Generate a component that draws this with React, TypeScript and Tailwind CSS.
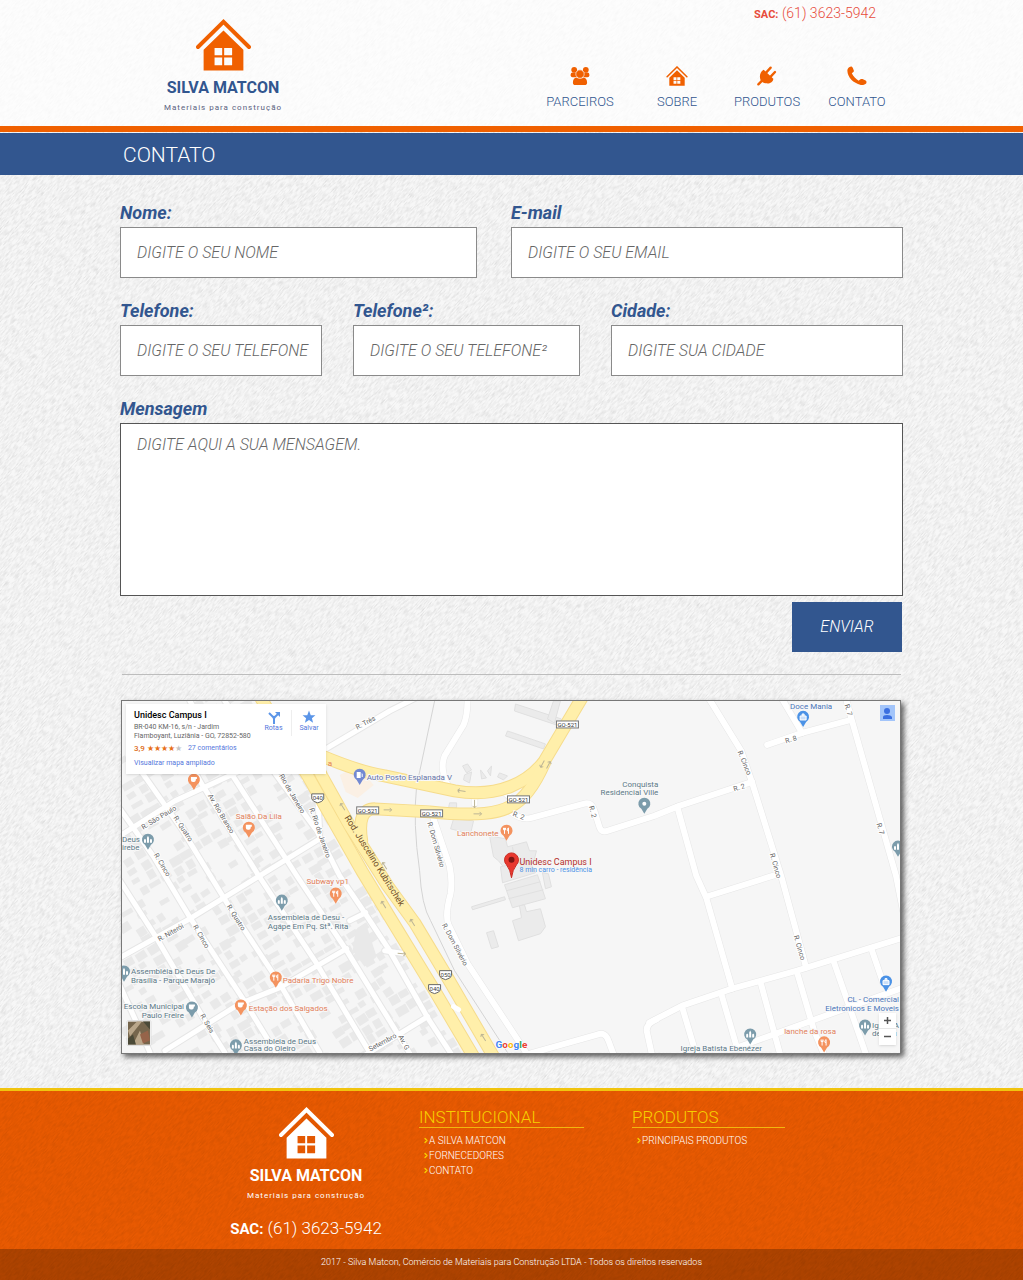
import React from "react";
import { ChevronRight } from "lucide-react";

function Texture({ id, className }: { id: string; className: string }) {
  return (
    <svg aria-hidden="true" className={"pointer-events-none absolute inset-0 h-full w-full " + className}>
      <defs>
        <filter id={id} x="0" y="0" width="100%" height="100%">
          <feTurbulence type="fractalNoise" baseFrequency="0.9 0.15" numOctaves={3} seed={7} />
          <feColorMatrix values="0 0 0 0 0  0 0 0 0 0  0 0 0 0 0  0.8 0 0 0 -0.3" />
        </filter>
      </defs>
      <g transform="rotate(42)">
        <rect x="-400" y="-1200" width="2600" height="2600" filter={"url(#" + id + ")"} />
      </g>
    </svg>
  );
}

function House({ className }: { className: string }) {
  return (
    <svg viewBox="137 28 166 156" className={className} fill="currentColor" aria-hidden="true">
      <path d="M143 112L220 36L297 112" fill="none" stroke="currentColor" strokeWidth="12" strokeLinecap="round" />
      <path
        fillRule="evenodd"
        d="M160 120L220 62L280 120V183H160ZM193 115V137H216V115ZM222 115V137H246V115ZM193 144V167H216V144ZM222 144V167H246V144Z"
      />
    </svg>
  );
}

function Logo({ tone, sub }: { tone: string; sub: string }) {
  return (
    <div className="flex w-[116px] flex-col items-center">
      <House className="h-[52px] w-[55px]" />
      <div className={"mt-[3px] whitespace-nowrap text-[16px] leading-[28px] font-bold " + tone}>SILVA MATCON</div>
      <div className={"whitespace-nowrap text-[8px] leading-[12px] font-normal tracking-[1px] " + sub}>
        Materiais para construção
      </div>
    </div>
  );
}

const UsersIcon = (
  <svg viewBox="172 195 62 60" className="h-5 w-5" fill="currentColor" aria-hidden="true">
    <circle cx="185" cy="206" r="9" />
    <circle cx="221" cy="206" r="9" />
    <rect x="174" y="214" width="24" height="15" rx="6" />
    <rect x="208" y="214" width="24" height="15" rx="6" />
    <circle cx="203" cy="219" r="13" stroke="#fcfcfc" strokeWidth="2" />
    <path d="M181 245C181 236 187 229 194 231Q203 236 212 231C219 229 225 236 225 245Q225 253 217 253H189Q181 253 181 245Z" />
  </svg>
);
const PlugIcon = (
  <svg viewBox="737 195 58 60" className="h-5 w-5" fill="currentColor" aria-hidden="true">
    <g fill="none" stroke="currentColor" strokeLinecap="round">
      <path d="M764 214L777 200M777 227L790 213" strokeWidth="7" />
      <path d="M740 250L752 238" strokeWidth="7" />
    </g>
    <path d="M756 206L785 233C785 243 774 248 765 247C757 247 747 243 746 235C743 226 745 211 756 206Z" />
  </svg>
);
const PhoneIcon = (
  <svg viewBox="0 0 58 58" className="h-5 w-5" fill="currentColor" aria-hidden="true">
    <path d="M10 2C13 1 16 3 17 6L20 14C20 18 16 20 14 21C18 30 26 38 34 43C37 39 41 37 45 38L54 42C57 44 57 47 56 50C53 54 46 56 40 55C18 50 2 33 1 14C1 8 4 3 10 2Z" />
  </svg>
);

const nav = [
  { label: "PARCEIROS", icon: UsersIcon },
  { label: "SOBRE", icon: <House className="h-5 w-[22px]" /> },
  { label: "PRODUTOS", icon: PlugIcon },
  { label: "CONTATO", icon: PhoneIcon },
];

const labelCls = "block text-[18px] leading-[28px] font-bold italic text-[#32568f]";
const fieldCls =
  "block w-full rounded-none border border-[#8a8a8a] bg-white pl-4 text-[16px] font-light italic text-[#555] placeholder:text-[#666] outline-none";

function Field({ id, label, hint, type = "text" }: { id: string; label: string; hint: string; type?: string }) {
  return (
    <div className="min-w-0">
      <label htmlFor={id} className={labelCls}>
        {label}
      </label>
      <input id={id} type={type} placeholder={hint} className={fieldCls + " h-[51px]"} />
    </div>
  );
}

/* ---------- Map ---------- */

const streets = [
  "M120 880L157 938L203 1017L225 1052",
  "M120 808L153 855L192 920L243 998L276 1052",
  "M130 755L148 780L183 830L230 907L280 983L320 1052",
  "M160 710L203 785L257 872L317 963L370 1052",
  "M190 700L233 775L297 875L347 950L412 1056",
  "M225 700L277 775L317 830L340 875L365 912L390 950L428 1017L452 1054",
  "M318 795L320 832",
  "M120 835L175 800L240 770L326 748L390 710L430 690",
  "M120 957L190 918L263 873L320 838",
  "M165 1050L240 1003L280 987L347 948",
  "M350 920L366 912",
  "M360 1058L428 1016",
  "M385 950L406 953",
  "M120 985L150 1052",
];
const eastStreets = [
  "M468 698Q468 715 464 724L445 755Q440 768 448 784",
  "M475 797V812M503 790L515 800",
  "M433 815L450 865Q453 880 451 893Q445 915 449 924L468 963L528 1054",
  "M508 808Q520 820 532 817L584 803Q592 800 595 810L600 826Q602 832 608 830L655 815L680 805L753 781",
  "M710 698L742 750L753 782L782 875L807 967",
  "M678 806L697 875L707 897L733 988",
  "M707 896L780 873",
  "M768 744L803 732L852 719",
  "M783 698L803 732",
  "M847 698L853 720L897 875L904 910",
  "M650 1022L683 1005L733 988L798 970L904 937",
  "M735 1048L777 1033L904 987",
  "M683 1007L697 1054",
  "M722 993L738 1048",
  "M762 984L781 1054",
  "M798 972L815 1030L825 1054",
  "M835 962L867 1054",
  "M873 950L884 982",
  "M520 1056L598 1034Q606 1031 609 1040L615 1056",
  "M657 1019Q645 1024 648 1033L653 1056",
];
const highways = [
  "M258 692L308 775L362 870L388 913L435 990L474 1056",
  "M290 710L322 775L350 825L388 885L415 922L445 972L494 1056",
];
const avenues = [
  "M322 755Q360 771 385 775L455 790C500 798 530 780 545 760Q560 735 583 696",
  "M362 840Q357 808 375 808L430 811C480 816 500 812 512 805Q530 796 545 762",
];

const blocks: [number, number, number, number, number][] = [];
for (let row = 0; row < 44; row++) {
  for (let col = 0; col < 40; col++) {
    const seed = (row * 73 + col * 151 + row * col * 17) % 101;
    if (seed % 10 < 3) continue;
    const u = -260 + col * 13 + (seed % 5);
    const v = -40 + row * 11 + (seed % 3);
    const x = 122 + u * 0.86 + v * 0.52;
    const y = 790 - u * 0.5 + v * 0.86;
    if (x < 118 || y < 696 || y > 1056 || x > 262 + (y - 700) * 0.56) continue;
    blocks.push([x, y, 7 + (seed % 6), 5 + (seed % 5), seed]);
  }
}

const campus = [
  "M516 703L562 718L560 725L515 710Z",
  "M508 730L546 743L544 748L506 735Z",
  "M561 700L555 722L548 718L554 700Z",
  "M454 818L474 820L471 833L451 828Z",
  "M463 765L468 763L472 769L467 772ZM465 774L472 771L470 782L464 779ZM481 769L487 777L482 778ZM488 770L492 765L491 775ZM500 772L508 775L504 779L498 776ZM450 802H457V807H449Z",
  "M490 835L506 838L508 846L527 841L530 850L537 850L534 862L507 870L499 860L494 856Z",
  "M501 866L530 860L536 872L503 882Z",
  "M505 884L538 874L546 898L513 907Z",
  "M520 905L525 904L527 911L541 908L546 926L541 933L519 940L513 920L522 917Z",
  "M472 906L505 896L506 899L473 909Z",
  "M487 932L494 930L499 946L492 948Z",
  "M543 872L549 873L552 886L546 888Z",
];

const streetNames: [number, number, number, string][] = [
  [366, 722, -28, "R. Três"],
  [159, 817, -31, "R. São Paulo"],
  [183, 828, 57, "R. Quatro"],
  [221, 813, 59, "Av. Rio Branco"],
  [292, 793, 60, "Rio de Janeiro"],
  [320, 832, 71, "R. Rio de Janeiro"],
  [162, 864, 60, "R. Cinco"],
  [171, 932, -30, "R. Niterói"],
  [236, 917, 58, "R. Quatro"],
  [201, 936, 60, "R. Cinco"],
  [207, 1023, 60, "R. Seis"],
  [383, 1042, -28, "Setembro"],
  [404, 1042, 62, "Av. G"],
  [436, 844, 74, "R. Dom Silvério"],
  [455, 944, 62, "R. Dom Silvério"],
  [519, 815, 20, "R. 2"],
  [593, 811, 76, "R. 2"],
  [740, 787, -18, "R. 2"],
  [745, 762, 68, "R. Cinco"],
  [776, 865, 74, "R. Cinco"],
  [800, 947, 74, "R. Cinco"],
  [792, 739, -17, "R. 8"],
  [849, 709, 73, "R. 7"],
  [881, 828, 74, "R. 7"],
];

const poi = { food: "#f4935f", place: "#7c9cab", shop: "#4b92e6", fuel: "#7389d2" };
const poiText = { food: "#e2805a", place: "#5c7987", shop: "#4a76b8", fuel: "#6574a8" };
type Kind = keyof typeof poi;
const pins: [number, number, Kind, string][] = [
  [194, 780, "food", "cup"],
  [249, 828, "food", "cup"],
  [336, 894, "food", "fork"],
  [507, 831, "food", "fork"],
  [276, 978, "food", "fork"],
  [241, 1006, "food", "cup"],
  [825, 1043, "food", "fork"],
  [148, 840, "place", "church"],
  [282, 901, "place", "church"],
  [124, 972, "place", "church"],
  [192, 1008, "place", "cup"],
  [236, 1046, "place", "church"],
  [645, 804, "place", "dot"],
  [751, 1035, "place", "church"],
  [866, 1026, "place", "church"],
  [899, 847, "place", "church"],
  [804, 717, "shop", "bag"],
  [887, 982, "shop", "bag"],
  [360, 775, "fuel", "pump"],
];
const glyphs: Record<string, React.ReactNode> = {
  cup: <path d="M-3 -3H3V-1H2Q2 2 0 2H-1Q-3 2 -3 0Z" fill="#fff" />,
  fork: <path d="M-2 -3V3M-3 -3V-1H-1V-3M2 3V-3Q0 -2 1 0H2" fill="none" stroke="#fff" strokeWidth="1" />,
  church: <path d="M-4 3V0L-3 -1L-2 0V3ZM-1 3V-2L0 -4L1 -2V3ZM2 3V0L3 -1L4 0V3Z" fill="#fff" />,
  dot: <circle r="2" fill="#fff" />,
  bag: <path d="M-3 -1H3V3H-3ZM-1 -1V-3H1V-1" fill="#fff" fillOpacity="0.7" stroke="#fff" strokeWidth="1" />,
  pump: <path d="M-3 -3H1V3H-3ZM2 -2L3 -1V2H2" fill="#fff" />,
};
const poiLabels: [number, number, Kind, string, "start" | "middle" | "end"][] = [
  [367, 779, "fuel", "Auto Posto Esplanada V", "start"],
  [259, 818, "food", "Salão Da Lila", "middle"],
  [328, 883, "food", "Subway vp1", "middle"],
  [499, 835, "food", "Lanchonete", "end"],
  [283, 982, "food", "Padaria Trigo Nobre", "start"],
  [249, 1010, "food", "Estação dos Salgados", "start"],
  [811, 1033, "food", "lanche da rosa", "middle"],
  [122, 841, "place", "Deus", "start"],
  [122, 849, "place", "irebe", "start"],
  [268, 919, "place", "Assembleia de Desu -", "start"],
  [268, 928, "place", "Agápe Em Pq. Stª. Rita", "start"],
  [131, 973, "place", "Assembléia De Deus De", "start"],
  [131, 982, "place", "Brasília - Parque Marajó", "start"],
  [184, 1008, "place", "Escola Municipal", "end"],
  [184, 1017, "place", "Paulo Freire", "end"],
  [244, 1043, "place", "Assembleia de Deus", "start"],
  [244, 1050, "place", "Casa do Oleiro", "start"],
  [659, 786, "place", "Conquista", "end"],
  [659, 794, "place", "Residencial Ville", "end"],
  [722, 1050, "place", "Igreja Batista Ebenézer", "middle"],
  [873, 1027, "place", "Igreja A", "start"],
  [873, 1035, "place", "de Deu", "start"],
  [812, 708, "shop", "Doce Mania", "middle"],
  [900, 1001, "shop", "CL - Comercial", "end"],
  [900, 1010, "shop", "Eletronicos E Moveis", "end"],
];
const shields: [number, number, string][] = [
  [318, 797, "040"],
  [446, 974, "050"],
  [435, 988, "040"],
];
const roadTags: [number, number][] = [
  [568, 723],
  [519, 798],
  [368, 809],
  [432, 812],
];
const arrows: [number, number, number][] = [
  [343, 806, 58], [385, 865, 58], [384, 904, 58], [413, 922, 58], [484, 1037, 58],
  [462, 790, 8], [478, 813, 180], [388, 809, 180], [543, 763, -62], [549, 764, 118], [402, 953, 185], [475, 803, -90],
];

function MapDrawing() {
  return (
    <svg viewBox="122 700 779 352" className="block h-auto w-full font-['Roboto',sans-serif]" role="img" aria-label="Mapa">
      <rect x="122" y="700" width="779" height="352" fill="#f6f6f6" />
      <g fill="#e9e9e9">
        {blocks.map(([x, y, w, h, s], i) => (
          <rect key={i} x={x} y={y} width={w} height={h} transform={`rotate(${s % 2 ? -30 : -33} ${x} ${y})`} />
        ))}
        <path d="M356 929L366 922L377 956L365 966L353 950Z" />
      </g>
      <path d="M346 791L340 774L358 765L374 784L358 797Z" fill="#fbf0e4" />
      <g fill="#ebebeb" stroke="#e0e0e0">
        {campus.map((d) => (
          <path key={d} d={d} />
        ))}
        <path d="M507 890L541 881M509 898L544 889M513 846L516 865" />
      </g>
      <path
        d="M435 700L417 785Q413 822 420 870Q422 905 431 920L455 970L508 1052"
        fill="none"
        stroke="#d4d4d4"
      />
      <g fill="none" strokeLinejoin="round" strokeLinecap="round">
        {streets.concat(eastStreets).map((d) => (
          <path key={d} d={d} stroke="#e6e6e6" strokeWidth="7" />
        ))}
        {streets.map((d) => (
          <path key={d} d={d} stroke="#fff" strokeWidth="5" />
        ))}
        {eastStreets.map((d) => (
          <path key={d} d={d} stroke="#fff" strokeWidth="6" />
        ))}
        {avenues.concat(highways).map((d) => (
          <path key={d} d={d} stroke="#f6dc8c" strokeWidth="13" />
        ))}
        {avenues.concat(highways).map((d) => (
          <path key={d} d={d} stroke="#ffefaa" strokeWidth="11" />
        ))}
        <path d="M454 1006L459 1009" stroke="#fff" strokeWidth="5" />
      </g>
      {arrows.map(([x, y, r]) => (
        <path
          key={x + "-" + y}
          d="M-4 0H4M-4 0L-2 -2M-4 0L-2 2"
          transform={`translate(${x} ${y}) rotate(${r})`}
          fill="none"
          stroke="#bdb595"
        />
      ))}
      <g fill="#666" fontSize="7" textAnchor="middle" stroke="#fff" strokeWidth="2" paintOrder="stroke">
        {streetNames.map(([x, y, r, t], i) => (
          <text key={i} transform={`translate(${x} ${y}) rotate(${r})`} dy="2">
            {t}
          </text>
        ))}
      </g>
      <text transform="translate(375 860) rotate(58)" dy="3" textAnchor="middle" fontSize="9" fill="#70502a">
        Rod. Juscelino Kubitschek
      </text>
      <text x="328" y="765" fontSize="8" fill="#e2805a">a</text>
      {shields.map(([x, y, t]) => (
        <g key={x}>
          <path
            d={`M${x - 6} ${y - 4}H${x + 6}V${y + 1}Q${x + 5} ${y + 4} ${x} ${y + 5}Q${x - 5} ${y + 4} ${x - 6} ${y + 1}Z`}
            fill="#fff"
            stroke="#666"
          />
          <text x={x} y={y + 2} fontSize="6" textAnchor="middle" fill="#444">
            {t}
          </text>
        </g>
      ))}
      {roadTags.map(([x, y]) => (
        <g key={x}>
          <rect x={x - 11} y={y - 3} width="22" height="7" fill="#fff" stroke="#777" />
          <text x={x} y={y + 3} fontSize="6" textAnchor="middle" fill="#333">
            GO-521
          </text>
        </g>
      ))}
      {pins.map(([x, y, k, g]) => (
        <g key={x + "-" + y} transform={`translate(${x} ${y - 1})`}>
          <path d="M0 10L-3 5A6 6 0 1 1 3 5Z" fill={poi[k]} />
          {glyphs[g]}
        </g>
      ))}
      <g fontSize="8" stroke="#f8f8f8" strokeWidth="2" paintOrder="stroke">
        {poiLabels.map(([x, y, k, t, a], i) => (
          <text key={i} x={x} y={y} textAnchor={a} fill={poiText[k]}>
            {t}
          </text>
        ))}
      </g>
      <path d="M512 877Q511 869 507 864A7 7 0 1 1 517 864Q513 869 512 877Z" fill="#e8382e" stroke="#c92b22" />
      <circle cx="512" cy="859" r="3" fill="#7c1512" />
      <text x="520" y="864" fontSize="9" fill="#b5312b">Unidesc Campus I</text>
      <text x="520" y="871" fontSize="7" fill="#4b92e6">8 min carro - residência</text>
      <g fontSize="10" fontWeight="700" stroke="#fff" strokeWidth="1" paintOrder="stroke">
        <text x="496" y="1047">
          <tspan fill="#4285f4">G</tspan>
          <tspan fill="#ea4335">o</tspan>
          <tspan fill="#fbbc05">o</tspan>
          <tspan fill="#4285f4">g</tspan>
          <tspan fill="#34a853">l</tspan>
          <tspan fill="#ea4335">e</tspan>
        </text>
      </g>
      <g>
        <rect x="127" y="1020" width="24" height="25" rx="1" fill="#fff" stroke="#ddd" />
        <rect x="128" y="1021" width="22" height="23" fill="#76664d" />
        <path d="M128 1030L137 1021H142L130 1036ZM133 1044L140 1030L144 1044Z" fill="#b9a68a" />
        <path d="M140 1034L148 1030L150 1040L143 1043Z" fill="#96644a" />
        <path d="M143 1021L150 1029V1021ZM128 1038L133 1034L136 1044H128Z" fill="#4b4a38" />
      </g>
    </svg>
  );
}

function MapPanel() {
  return (
    <section
      aria-label="Localização"
      className="relative mr-[2px] ml-px overflow-hidden border border-[#777] font-['Roboto',sans-serif] shadow-[3px_3px_5px_rgba(0,0,0,0.6)]"
    >
      <MapDrawing />
      <div className="absolute top-[3px] left-[4px] flex h-[70px] w-[200px] justify-between bg-white pt-[6px] pl-[8px] shadow-sm">
        <div className="whitespace-nowrap text-[7px] leading-[9px] text-[#666]">
          <h2 className="text-[9px] leading-[10px] font-medium text-black">Unidesc Campus I</h2>
          <p className="mt-[3px]">
            BR-040 KM-16, s/n - Jardim
            <br />
            Flamboyant, Luziânia - GO, 72852-580
          </p>
          <p className="mt-[3px] flex items-center">
            <span className="text-[8px] font-medium text-[#dd6b20]">3,9</span>
            <span className="ml-[2px] text-[8px] text-[#e7711b]">
              ★★★★<span className="text-[#c4c4c4]">★</span>
            </span>
            <a href="#comentarios" className="ml-[6px] text-[#5477dc]">27 comentários</a>
          </p>
          <a href="#mapa" className="mt-[6px] block text-[#5477dc]">Visualizar mapa ampliado</a>
        </div>
        <div className="flex h-[26px] text-[7px] leading-[9px] text-[#5477dc]">
          <a href="#rotas" className="flex w-[36px] flex-col items-center border-r border-[#eee]">
            <svg viewBox="0 0 14 14" className="h-[14px] w-[14px] shrink-0" fill="none" stroke="#5b95e8" strokeWidth="2" aria-hidden="true">
              <path d="M7 14V9Q7 7 5 6L2 3M7 9Q7 7 9 6L11 4" />
              <path d="M8 2H13V7Z" fill="#5b95e8" stroke="none" />
            </svg>
            Rotas
          </a>
          <a href="#salvar" className="flex w-[34px] flex-col items-center">
            <svg viewBox="0 0 24 24" className="h-[14px] w-[14px] shrink-0" fill="#5b95e8" aria-hidden="true">
              <path d="M12 1L15 9H23L17 14L19 22L12 17L5 22L7 14L1 9H9Z" />
            </svg>
            Salvar
          </a>
        </div>
      </div>
      <button type="button" aria-label="Conta" className="absolute top-[4px] right-[5px] h-[16px] w-[15px] bg-[#a3c5fa]">
        <svg viewBox="0 0 15 16" className="h-full w-full" fill="#3b6fe0" aria-hidden="true">
          <circle cx="7" cy="6" r="3" />
          <path d="M3 14V12Q3 10 7 10T12 12V14Z" />
        </svg>
      </button>
      <div className="absolute right-[4px] bottom-[8px] flex w-[17px] flex-col divide-y divide-[#e6e6e6] bg-white text-[#555] shadow">
        <button type="button" aria-label="Aumentar zoom" className="flex h-[16px] items-center justify-center">
          <svg viewBox="0 0 14 14" className="h-[7px] w-[7px]" stroke="currentColor" strokeWidth="3" aria-hidden="true">
            <path d="M0 7H14M7 0V14" />
          </svg>
        </button>
        <button type="button" aria-label="Diminuir zoom" className="flex h-[16px] items-center justify-center">
          <svg viewBox="0 0 14 14" className="h-[7px] w-[7px]" stroke="currentColor" strokeWidth="3" aria-hidden="true">
            <path d="M0 7H14" />
          </svg>
        </button>
      </div>
    </section>
  );
}

function FooterList({ title, items, width }: { title: string; items: string[]; width: string }) {
  return (
    <nav aria-label={title} className={width}>
      <h2 className="border-b border-[#f1b60f] text-[17px] leading-[20px] font-light text-[#f6d000]">{title}</h2>
      <ul className="mt-[5px] pl-[3px]">
        {items.map((t) => (
          <li key={t}>
            <a href="#" className="flex items-center text-[10px] leading-[15px] font-light whitespace-nowrap text-white">
              <ChevronRight className="-mr-px h-[9px] w-[8px] text-[#f6d000]" strokeWidth={4} aria-hidden="true" />
              {t}
            </a>
          </li>
        ))}
      </ul>
    </nav>
  );
}

export default function App() {
  return (
    <div className="relative isolate flex min-h-screen flex-col overflow-hidden bg-[#f7f7f7] font-['Roboto',sans-serif]">
      <Texture id="paper" className="-z-10 opacity-25" />
      <header className="border-b-[6px] border-[#f06000] bg-white/75">
        <div className="mx-auto flex h-[126px] w-full max-w-[783px] justify-between">
          <a href="#" aria-label="Silva Matcon" className="mt-[19px] ml-[45px] text-[#f06000]">
            <Logo tone="text-[#32568f]" sub="text-[#5a5f80]" />
          </a>
          <div className="flex flex-col pr-px">
            <p className="mt-[4px] mr-[26px] text-right text-[14px] leading-[18px] font-light text-[#e74c3c]">
              <strong className="text-[11px] font-bold">SAC:</strong> (61) 3623-5942
            </p>
            <nav aria-label="Principal" className="mt-[42px] flex">
              {nav.map((n, i) => (
                <a
                  key={n.label}
                  href="#"
                  className={"flex flex-col items-center text-[#f06000] " + (i === 0 ? "w-[104px]" : "w-[90px]")}
                >
                  {n.icon}
                  <span className="mt-[7px] text-[13px] leading-[18px] font-light text-[#32568f]">{n.label}</span>
                </a>
              ))}
            </nav>
          </div>
        </div>
      </header>

      <div className="mt-px bg-[#32568f]">
        <h1 className="mx-auto h-[42px] w-full max-w-[783px] pl-[3px] text-[21px] leading-[44px] font-light text-white">
          CONTATO
        </h1>
      </div>

      <main className="mx-auto w-full max-w-[783px] pt-[24px] pb-[34px]">
        <form className="flex flex-col gap-[19px]">
          <div className="grid grid-cols-[357fr_392fr] gap-[34px]">
            <Field id="nome" label="Nome:" hint="DIGITE O SEU NOME" />
            <Field id="email" type="email" label="E-mail" hint="DIGITE O SEU EMAIL" />
          </div>
          <div className="grid grid-cols-[202fr_227fr_292fr] gap-[31px]">
            <Field id="tel" type="tel" label="Telefone:" hint="DIGITE O SEU TELEFONE" />
            <Field id="tel2" type="tel" label="Telefone²:" hint="DIGITE O SEU TELEFONE²" />
            <Field id="cidade" label="Cidade:" hint="DIGITE SUA CIDADE" />
          </div>
          <div>
            <label htmlFor="mensagem" className={labelCls}>
              Mensagem
            </label>
            <textarea
              id="mensagem"
              placeholder="DIGITE AQUI A SUA MENSAGEM."
              className={fieldCls + " h-[173px] resize-none border-[#555] pt-[9px]"}
            />
            <button
              type="submit"
              className="mt-[6px] mr-px ml-auto block h-[50px] w-[110px] bg-[#32568f] text-[16px] font-light text-white italic"
            >
              ENVIAR
            </button>
          </div>
        </form>
        <hr className="mx-[2px] mt-[22px] mb-[25px] border-[#bdbdbd]" />
        <MapPanel />
      </main>

      <footer className="relative isolate mt-auto border-t-[3px] border-[#f1c40f] bg-[#e85a02] text-white">
        <Texture id="grain" className="-z-10 opacity-20" />
        <div className="mx-auto flex h-[158px] w-full max-w-[783px] pl-[108px]">
          <div className="mt-[16px] mr-[35px] flex w-[156px] flex-col items-center">
            <Logo tone="text-white" sub="text-white" />
            <p className="mt-[14px] text-[17px] leading-[24px] font-light whitespace-nowrap">
              <strong className="text-[15px] font-bold">SAC:</strong> (61) 3623-5942
            </p>
          </div>
          <div className="mt-[16px] flex gap-[48px]">
            <FooterList title="INSTITUCIONAL" width="w-[165px]" items={["A SILVA MATCON", "FORNECEDORES", "CONTATO"]} />
            <FooterList title="PRODUTOS" width="w-[153px]" items={["PRINCIPAIS PRODUTOS"]} />
          </div>
        </div>
        <p className="bg-black/25 pb-[4px] text-center text-[9px] leading-[27px] font-light">
          2017 - Silva Matcon, Comércio de Materiais para Construção LTDA - Todos os direitos reservados
        </p>
      </footer>
    </div>
  );
}
